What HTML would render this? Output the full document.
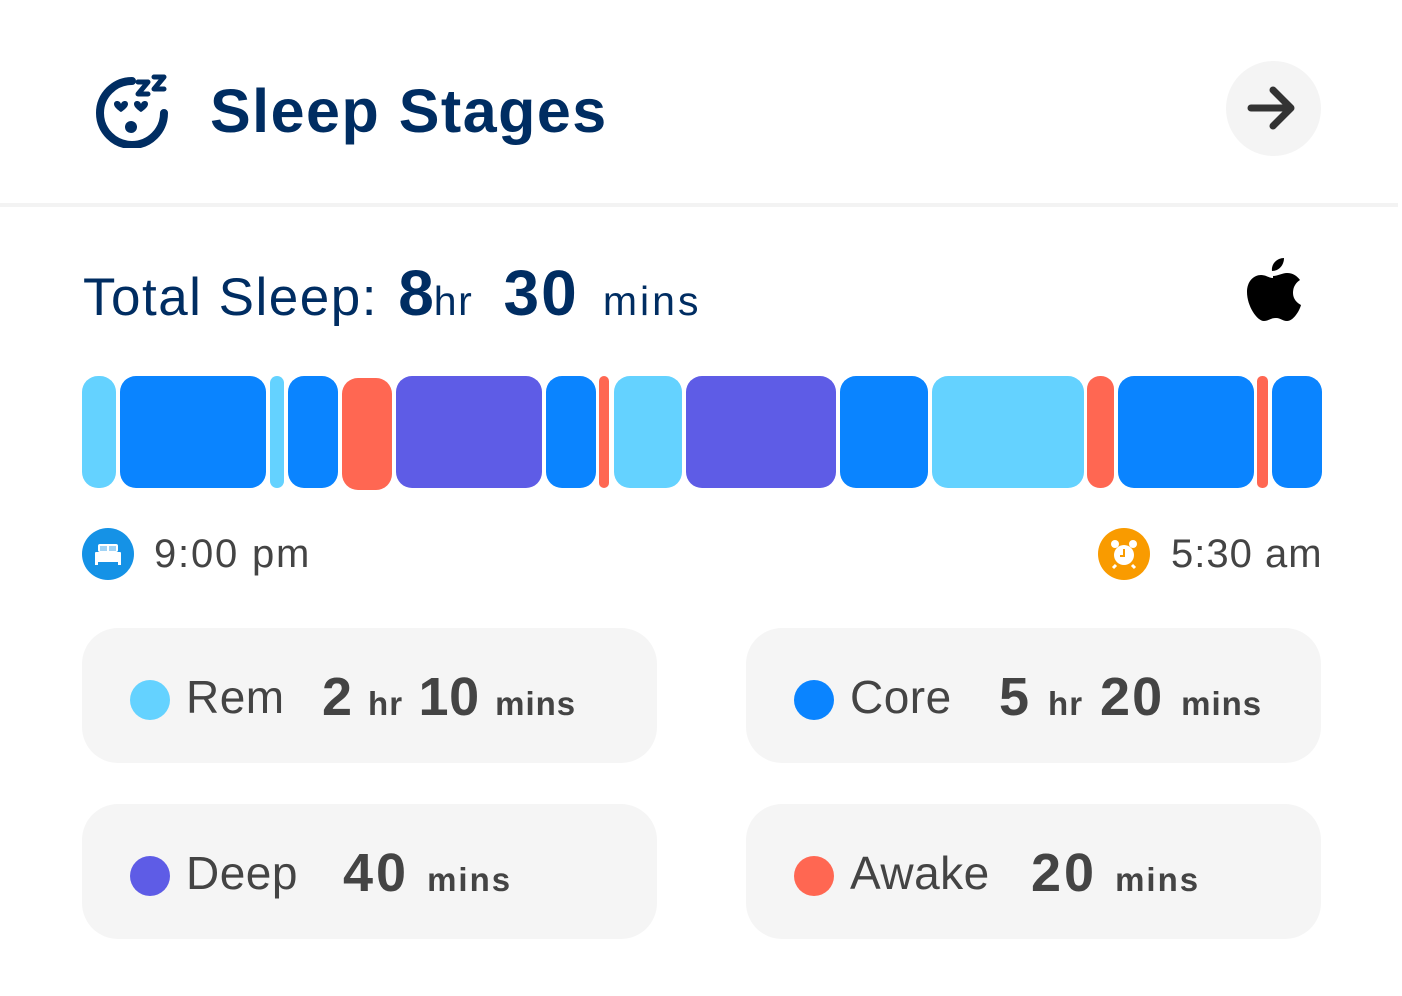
<!DOCTYPE html>
<html><head><meta charset="utf-8"><style>
*{margin:0;padding:0;box-sizing:border-box}
body{width:1402px;height:996px;background:#fff;font-family:"Liberation Sans",sans-serif;position:relative;overflow:hidden}
.a{position:absolute;white-space:nowrap}
.seg{position:absolute;top:376px;height:112px;border-radius:16px}
.L{background:#64D2FF}.B{background:#0A84FF}.R{background:#FF6752}.P{background:#5E5CE6}
.card{position:absolute;width:575px;height:135px;background:#F5F5F5;border-radius:36px}
.dot{position:absolute;width:40px;height:40px;border-radius:50%;left:48px;top:52px}
.lab{position:absolute;left:104px;top:42px;font-size:46px;color:#444;letter-spacing:0.5px}
.val{position:absolute;top:38px;font-size:54px;font-weight:bold;color:#444;letter-spacing:0.5px}
.val small{font-size:33px;letter-spacing:1px}
</style></head><body>
<svg class="a" style="left:94px;top:72px" width="80" height="76" viewBox="0 0 80 76">
<path d="M38 8 A32 32 0 1 0 70 40" fill="none" stroke="#002D62" stroke-width="8" stroke-linecap="round" transform="translate(0,1)"/>
<path d="M44 10h10l-10 12h10M60 5h10l-10 12h10" fill="none" stroke="#002D62" stroke-width="5" stroke-linecap="round" stroke-linejoin="round"/>
<path d="M20 32c0-4 6-4 7 0c1-4 7-4 7 0c0 4-7 8-7 8s-7-4-7-8z M40 32c0-4 6-4 7 0c1-4 7-4 7 0c0 4-7 8-7 8s-7-4-7-8z" fill="#002D62"/>
<circle cx="37" cy="55" r="6" fill="#002D62"/>
</svg>
<div class="a" style="left:210px;top:76px;font-size:61px;font-weight:bold;color:#002D62;letter-spacing:1.5px">Sleep Stages</div>
<div class="a" style="left:1226px;top:61px;width:95px;height:95px;border-radius:50%;background:#F4F4F4"></div>
<svg class="a" style="left:1246px;top:84px" width="52" height="48" viewBox="0 0 52 48"><path d="M5 24h40M27 6l18 18-18 18" fill="none" stroke="#333" stroke-width="7" stroke-linecap="round" stroke-linejoin="round"/></svg>
<div class="a" style="left:0;top:203px;width:1398px;height:4px;background:#F3F3F3"></div>
<div class="a" style="left:83px;top:256px;color:#002D62;font-size:53px;letter-spacing:1.5px">Total Sleep: <b style="font-size:64px;margin-left:4px;letter-spacing:0">8</b><span style="font-size:41px">hr</span> <b style="font-size:64px;margin-left:14px;letter-spacing:2px">30</b> <span style="font-size:41px;margin-left:8px;letter-spacing:3px">mins</span></div>
<svg class="a" style="left:1244px;top:254px" width="58" height="70" viewBox="0 0 58 70">
<path d="M40 4c0 7-5 13-12 13c-1-7 5-13 12-13z" fill="#000"/>
<path d="M29 22c5 0 9-3 14-3c6 0 10 3 13 7c-6 4-7 9-7 13c0 6 4 10 8 12c-2 7-8 16-14 16c-5 0-6-3-11-3c-6 0-7 3-12 3c-7 0-17-15-17-29c0-11 7-17 14-17c5 0 8 3 12 3z" fill="#000"/>
</svg>
<div class="seg L" style="left:82px;width:34px"></div>
<div class="seg B" style="left:120px;width:146px"></div>
<div class="seg L" style="left:270px;width:14px;border-radius:7px"></div>
<div class="seg B" style="left:288px;width:50px"></div>
<div class="seg R" style="left:342px;width:50px;top:378px"></div>
<div class="seg P" style="left:396px;width:146px"></div>
<div class="seg B" style="left:546px;width:50px"></div>
<div class="seg R" style="left:599px;width:10px;border-radius:5px"></div>
<div class="seg L" style="left:614px;width:68px"></div>
<div class="seg P" style="left:686px;width:150px"></div>
<div class="seg B" style="left:840px;width:88px"></div>
<div class="seg L" style="left:932px;width:152px"></div>
<div class="seg R" style="left:1087px;width:27px;border-radius:13px"></div>
<div class="seg B" style="left:1118px;width:136px"></div>
<div class="seg R" style="left:1257px;width:11px;border-radius:5px"></div>
<div class="seg B" style="left:1272px;width:50px"></div>
<div class="a" style="left:82px;top:528px;width:52px;height:52px;border-radius:50%;background:#1592E6"></div>
<svg class="a" style="left:94px;top:542px" width="28" height="24" viewBox="0 0 28 24"><rect x="4" y="2" width="20" height="8" rx="2" fill="#fff"/><rect x="1" y="10" width="26" height="10" rx="1" fill="#fff"/><rect x="6" y="4" width="7" height="5" fill="#1592E6" opacity=".4"/><rect x="15" y="4" width="7" height="5" fill="#1592E6" opacity=".4"/><rect x="1" y="19" width="3" height="4" fill="#fff"/><rect x="24" y="19" width="3" height="4" fill="#fff"/></svg>
<div class="a" style="left:154px;top:532px;font-size:40px;color:#444;letter-spacing:1.8px">9:00 pm</div>
<div class="a" style="left:1098px;top:528px;width:52px;height:52px;border-radius:50%;background:#F99B00"></div>
<svg class="a" style="left:1108px;top:538px" width="32" height="32" viewBox="0 0 32 32"><circle cx="16" cy="17" r="10" fill="#fff"/><path d="M16 11v7h-4" fill="none" stroke="#F99B00" stroke-width="2"/><circle cx="7" cy="6" r="4" fill="#fff"/><circle cx="25" cy="6" r="4" fill="#fff"/><path d="M8 27l-3 3M24 27l3 3" stroke="#fff" stroke-width="3"/></svg>
<div class="a" style="left:1171px;top:532px;font-size:40px;color:#444;letter-spacing:1px">5:30 am</div>
<div class="card" style="left:82px;top:628px"><div class="dot" style="background:#64D2FF"></div><div class="lab">Rem</div><div class="val" style="left:240px">2 <small>hr</small> 10 <small>mins</small></div></div>
<div class="card" style="left:746px;top:628px"><div class="dot" style="background:#0A84FF"></div><div class="lab">Core</div><div class="val" style="left:253px;letter-spacing:2px">5 <small>hr</small> 20 <small>mins</small></div></div>
<div class="card" style="left:82px;top:804px"><div class="dot" style="background:#5E5CE6"></div><div class="lab">Deep</div><div class="val" style="left:261px;letter-spacing:3px">40 <small style="letter-spacing:2px">mins</small></div></div>
<div class="card" style="left:746px;top:804px"><div class="dot" style="background:#FF6752"></div><div class="lab">Awake</div><div class="val" style="left:285px;letter-spacing:3px">20 <small style="letter-spacing:2px">mins</small></div></div>
</body></html>
